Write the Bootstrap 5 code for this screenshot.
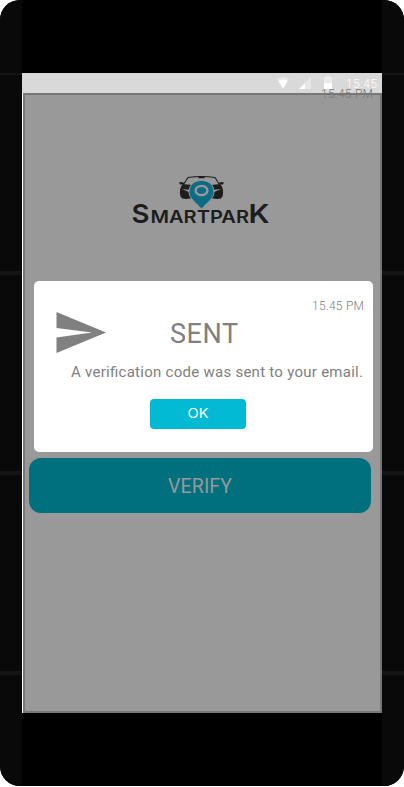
<!DOCTYPE html>
<html lang="en">
<head>
<meta charset="utf-8">
<meta name="viewport" content="width=device-width, initial-scale=1">
<title>Smartpark</title>
<link href="https://cdn.jsdelivr.net/npm/bootstrap@5.3.0/dist/css/bootstrap.min.css" rel="stylesheet">
<style>
body{font-family:Roboto,sans-serif;background:#fff;overflow:hidden}
svg{display:block}
svg text{white-space:pre}
.device{width:404px;height:786px;border-radius:20px;background:#000}
.bezel{width:22px;background:#090909}
.seg{height:200px;border-bottom:4px solid #151515}
.seg-top{height:75px;border-bottom:2px solid #151515}
.display{width:360px;padding-top:73px}
.statusbar{height:20px;background:#d9d9d9;padding-right:1px}
.app-frame{height:620px;background:#fff;padding-left:1px}
.screen{height:620px;background:#999;border:2px solid #777;padding-left:4px;padding-right:9px}
.logo{margin-top:79px;margin-left:101px}
.btn-verify{margin-top:230px;height:55px;border-radius:12px;background:#00707f;color:#999;border:0}
.page-time{top:85px;right:30px}
.dialog{left:34px;top:281px;width:339px;height:171px;border-radius:5px;color:#808080}
.btn-ok{width:96px;height:30px;margin-left:116px;border-radius:4px;background:#03bad5;color:#fff;border:0}
</style>
</head>
<body>
<div class="device d-flex position-relative overflow-hidden">
  <div class="bezel"><div class="seg-top"></div><div class="seg"></div><div class="seg"></div><div class="seg"></div></div>
  <main class="display">
    <div class="statusbar d-flex justify-content-end">
      <svg width="104" height="20" viewBox="0 0 104 20">
        <path d="M0 6Q6 2 12 6L6 15.500Z" fill="#e8e8e8"/>
        <path d="M1.500 8Q6 5.500 10.500 8L6 15.500Z" fill="#fff"/>
        <path d="M22 16L34 4V16Z" fill="#e6e6e6"/><path d="M22 16L28 10V16Z" fill="#fff"/>
        <path d="M47 4h2V3h4v1h2v6h-8Z" fill="#e8e8e8"/><path d="M47 10h8v6h-8Z" fill="#fff"/>
        <text x="69" y="15" fill="#fff" font-size="12" textLength="31" font-family="Roboto" font-weight="300">15:45</text>
      </svg>
    </div>
    <div class="app-frame">
      <div class="screen">
        <svg class="logo" width="142" height="54" viewBox="0 0 142 54" role="img" aria-label="Smartpark">
          <g transform="translate(2,2)">
            <path d="M51.500 8.500L56 1.500Q69.500-.5 83 1.500L87.500 8.500" fill="none" stroke="#1d1d1d" stroke-width="1.100"/>
            <path d="M66.500 .5h6v1.700h-6ZM47 6.500q3-1 5 .5v1.500h-4ZM92 6.500q-3-1-5 .5v1.500h4Z" fill="#1d1d1d"/>
            <path d="M51 8Q46.500 12 48.500 20.500Q49.500 23 54 23L62 22L59 17L50 13L59 14L60 9ZM88 8Q92.500 12 90.500 20.500Q89.500 23 85 23L77 22L80 17L89 13L80 14L79 9Z" fill="#1d1d1d"/>
            <path d="M69.500 4.500C61 4.500 57 10 57 16C57 22 63 26 69.500 33C76 26 82 22 82 16C82 10 78 4.500 69.500 4.500Z" fill="#0c6c83" stroke="#999" stroke-width="1"/>
            <ellipse cx="69.500" cy="14.500" rx="5.900" ry="4.700" fill="none" stroke="#999" stroke-width="2.300"/>
          </g>
          <g fill="#1d1d1d" font-family="Inter, sans-serif" font-weight="600">
            <text x="1.500" y="49" font-size="26" textLength="18" lengthAdjust="spacingAndGlyphs">S</text>
            <text x="20.500" y="49" font-size="17.500" textLength="98.500" lengthAdjust="spacingAndGlyphs">MARTPAR</text>
            <text x="118.500" y="49" font-size="26" textLength="21" lengthAdjust="spacingAndGlyphs">K</text>
          </g>
        </svg>
        <button class="btn btn-verify w-100 d-flex align-items-center p-0"><svg width="342" height="55"><text x="139" y="35" font-family="Roboto" font-size="19.500" fill="#999" textLength="64">VERIFY</text></svg></button>
      </div>
    </div>
  </main>
  <div class="bezel"><div class="seg-top"></div><div class="seg"></div><div class="seg"></div><div class="seg"></div></div>
  <div class="page-time position-absolute">
    <svg width="53" height="18"><text x="0" y="13" font-size="12" fill="#777" textLength="52" font-family="Roboto" font-weight="300">15.45 PM</text></svg>
  </div>
  <section class="dialog position-absolute bg-white" role="dialog" aria-label="Sent">
    <svg width="339" height="118" viewBox="0 0 339 118" fill="#808080" font-family="Roboto, sans-serif">
      <path d="M22.500 31L72 51.500L22.500 72V56.500L58 51.500L22.500 47Z"/>
      <text x="278" y="29" font-size="12" textLength="52" font-weight="300">15.45 PM</text>
      <text x="136" y="62" font-size="27" textLength="68">SENT</text>
      <text x="37" y="96" font-size="15" textLength="292">A verification code was sent to your email.</text>
    </svg>
    <button class="btn btn-ok p-0 d-block"><svg width="96" height="30"><text x="37.500" y="19" font-family="Inter, sans-serif" font-size="12.500" fill="#fff" textLength="21" lengthAdjust="spacingAndGlyphs">OK</text></svg></button>
  </section>
</div>
<script src="https://cdn.jsdelivr.net/npm/bootstrap@5.3.0/dist/js/bootstrap.bundle.min.js"></script>
</body>
</html>
